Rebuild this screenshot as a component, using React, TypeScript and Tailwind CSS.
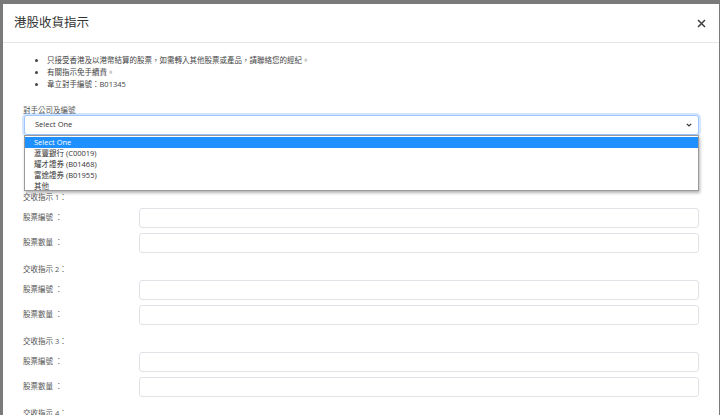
import React from 'react';

const notes = [
    '只接受香港及以港幣結算的股票，如需轉入其他股票或產品，請聯絡您的經紀。',
    '有關指示免手續費。',
    '韋立對手編號：B01345',
];

const options = ['Select One', '滙豐銀行 (C00019)', '耀才證券 (B01468)', '富途證券 (B01955)', '其他'];

const font = { fontFamily: '"Open Sans", "Noto Sans CJK TC", sans-serif' };

function Row({ label }: { label: string }) {
    return (
        <div className="flex items-center h-[20px]">
            <span className="w-[116px] shrink-0 text-[7.5px] text-[#555]">{label}</span>
            <div className="flex-1 h-[20px] rounded-[3px] border border-[#dfe2e6] bg-white"></div>
        </div>
    );
}

export default function App() {
    return (
        <div className="w-[720px] h-[415px] overflow-hidden bg-[#7a7a7a] pl-[3px] pt-[4px]" style={font}>
            <div className="w-[716px] h-[411px] bg-white flex flex-col">
                <div className="h-[39px] shrink-0 flex items-center justify-between pl-[11px] pr-[13px] border-b border-[#e6e6e6]">
                    <h4 className="text-[12.5px] text-[#333]">港股收貨指示</h4>
                    <svg width="9" height="9" viewBox="0 0 9 9" stroke="#444" strokeWidth="1.6">
                        <path d="M1 1l7 7M8 1l-7 7" />
                    </svg>
                </div>

                <div className="relative px-[20px] pt-[11px]">
                    <ul className="list-disc pl-[24px] text-[7.5px] leading-[12px] text-[#444]">
                        {notes.map((n, i) => (
                            <li key={i}>{n}</li>
                        ))}
                    </ul>

                    <div className="mt-[14px] text-[7.5px] leading-[12px] text-[#555]">對手公司及編號</div>
                    <div className="relative mt-[-1px] ml-[1px]">
                        <div className="h-[20px] rounded-[3px] border border-[#9ec5fe] shadow-[0_0_0_2px_rgba(13,110,253,0.18)] bg-white flex items-center justify-between pl-[10px] pr-[6px]">
                            <span className="text-[7.5px] text-[#333]">Select One</span>
                            <svg width="6" height="4" viewBox="0 0 6 4" fill="none" stroke="#333" strokeWidth="1.2">
                                <path d="M0.8 0.8l2.2 2.2L5.2 0.8" />
                            </svg>
                        </div>
                        <div className="absolute left-0 right-0 top-[20px] z-10 h-[56px] bg-white border border-[#9a9a9a] shadow-[1px_2px_3px_rgba(0,0,0,0.3)] pt-[1px]">
                            {options.map((o, i) => (
                                <div
                                    key={i}
                                    className={
                                        i === 0
                                            ? 'h-[11px] leading-[11px] pl-[9px] text-[7.5px] bg-[#1e90ff] text-white'
                                            : 'h-[11px] leading-[11px] pl-[9px] text-[7.5px] text-[#333]'
                                    }
                                >
                                    {o}
                                </div>
                            ))}
                        </div>
                    </div>

                    <div className="mt-[56px] flex flex-col">
                        {[1, 2, 3, 4].map((n) => (
                            <div key={n} className="flex flex-col mb-[10px]">
                                <div className="text-[7.5px] leading-[12px] text-[#555] mb-[5px]">交收指示 {n}：</div>
                                <div className="flex flex-col gap-[5px]">
                                    <Row label="股票編號 ：" />
                                    <Row label="股票數量 ：" />
                                </div>
                            </div>
                        ))}
                    </div>
                </div>
            </div>
        </div>
    );
}
